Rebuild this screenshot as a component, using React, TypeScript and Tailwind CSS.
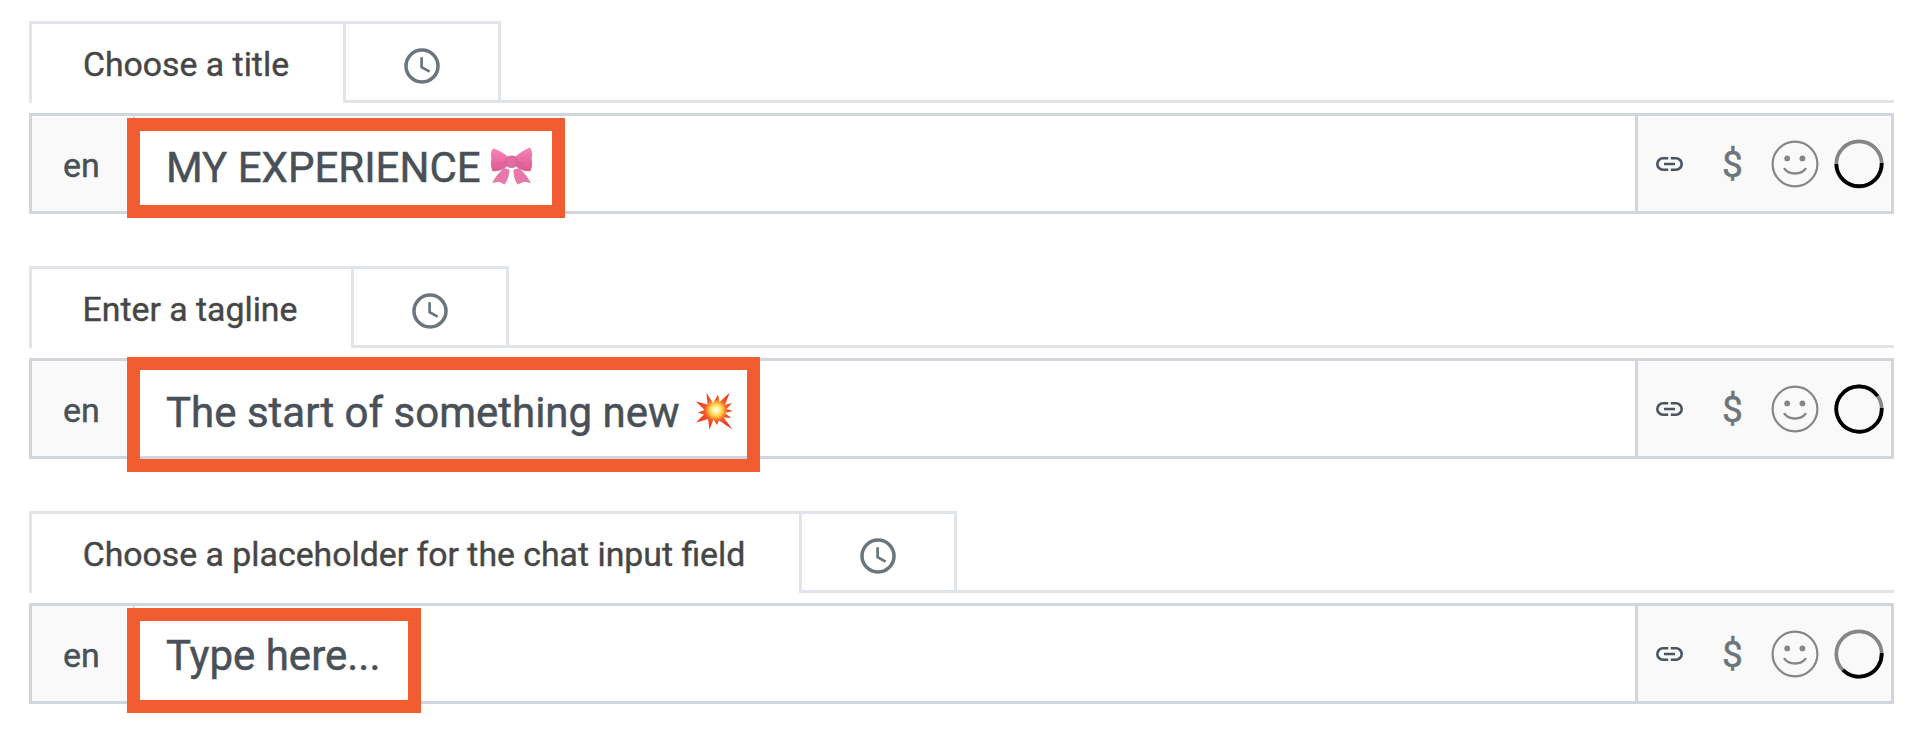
import React from "react";

type Row = {
  label: string;
  value: string;
  emoji?: "bow" | "boom";
  tabW: string;
  frame: string;
  valuePad: string;
  ring: number;
};

const rows: Row[] = [
  { label: "Choose a title", value: "MY EXPERIENCE", emoji: "bow", tabW: "w-[314px]", frame: "top-[2px] w-[438px] h-[100px]", valuePad: "pt-[7px]", ring: 180 },
  { label: "Enter a tagline", value: "The start of something new", emoji: "boom", tabW: "w-[322px]", frame: "top-[-4px] w-[633px] h-[115px]", valuePad: "pt-[8px]", ring: 325 },
  { label: "Choose a placeholder for the chat input field", value: "Type here...", tabW: "w-[770px]", frame: "top-[2px] w-[294px] h-[105px]", valuePad: "pt-[3px]", ring: 135 },
];

function Clock() {
  return (
    <svg viewBox="0 0 36 36" className="-ml-px size-9" fill="none" stroke="#6c757d" strokeWidth="3.5">
      <circle cx="18" cy="18" r="16" />
      <path d="M17.6 9.2V19.2L25.6 23.6" strokeWidth="2.7" />
    </svg>
  );
}

function Link() {
  return (
    <svg viewBox="0 0 27 14" className="h-[14px] w-[27px]" fill="none" stroke="#4b5560" strokeWidth="2.6">
      <path d="M12.2 1.3H7A5.7 5.7 0 0 0 7 12.7H12.2M14.8 1.3H20A5.7 5.7 0 0 1 20 12.7H14.8M8 7H19" />
    </svg>
  );
}

function Smile() {
  return (
    <svg viewBox="0 0 48 48" className="size-12" fill="none" stroke="#868686" strokeWidth="2.2">
      <circle cx="24" cy="24" r="22.4" />
      <circle cx="16.2" cy="18.4" r="2.9" fill="#868686" stroke="none" />
      <circle cx="31.4" cy="18.4" r="2.9" fill="#868686" stroke="none" />
      <path d="M13 28.2C17.5 35.3 30.5 35.3 35 28.2" strokeWidth="2.4" />
    </svg>
  );
}

function Ring({ deg }: { deg: number }) {
  const a = (deg * Math.PI) / 180;
  const x = 25 + 22.7 * Math.cos(a);
  const y = 25 + 22.7 * Math.sin(a);
  return (
    <svg viewBox="0 0 50 50" className="size-[50px]" fill="none" strokeWidth="3.7">
      <circle cx="25" cy="25" r="22.7" stroke="#858585" />
      <path d={`M47.7 24A22.7 22.7 0 ${deg > 180 ? 1 : 0} 1 ${x} ${y}`} stroke="#000" />
    </svg>
  );
}

function Bow() {
  return (
    <svg viewBox="0 0 44 40" preserveAspectRatio="none" className="-ml-px mt-[5px] h-[38px] w-[43px]">
      <defs>
        <linearGradient id="bow" x1="0" y1="0" x2="0" y2="1">
          <stop offset="0" stopColor="#f288b5" />
          <stop offset=".45" stopColor="#ec70a6" />
          <stop offset="1" stopColor="#d95a92" />
        </linearGradient>
      </defs>
      <path d="M14 22L7 30L2 38L9 36.5L15 39.5Q19.5 33 20 24Z" fill="#e878a8" />
      <path d="M30 22L37 30L42 38L35 36.5L28 39.5Q24 33 24 24Z" fill="#e878a8" />
      <path d="M18 10Q10 3 3 1.5Q0 6 1.500 12Q0 19 2.500 25.500Q11 26 18 20Z" fill="url(#bow)" />
      <path d="M26 10Q34 3 41 .5Q44.500 6 42.500 12Q44 19 41.500 25.500Q33 26 26 20Z" fill="url(#bow)" />
      <path d="M8 17.500Q13 17.500 17 15M36 17.500Q31 17.500 27 15" stroke="#d65c92" strokeWidth="1" fill="none" />
      <rect x="16.500" y="9.500" width="11" height="12" rx="4.500" fill="#e46ba0" stroke="#d2578c" strokeWidth=".8" />
    </svg>
  );
}

function Boom() {
  return (
    <svg viewBox="0 0 38 38" className="ml-[5px] mt-[5px] size-[38px]">
      <defs>
        <radialGradient id="boom" gradientUnits="userSpaceOnUse" cx="21" cy="18" r="20">
          <stop offset="0" stopColor="#fff" />
          <stop offset=".16" stopColor="#fff3a0" />
          <stop offset=".34" stopColor="#ffc63a" />
          <stop offset=".54" stopColor="#f6592a" />
          <stop offset="1" stopColor="#e8301c" />
        </radialGradient>
      </defs>
      <path d="M11.500 1L18 11L23 2.500L24.500 10L34.500 1L30 13L37 11L31.500 17L38 19L30 21L36 26L28.500 25.500L37.500 37.500L24 28.500L22 33L18.500 27.500L14.500 37.500L13 27L1 30.500L9 22.500L3 20.500L9.500 18L1 9.500L12.500 12.500Z" fill="url(#boom)" />
    </svg>
  );
}

function Field({ row }: { row: Row }) {
  return (
    <section className="flex h-[245px] flex-col">
      <div className="flex h-[82px]">
        <div className={`${row.tabW} flex items-center justify-center border-l-[3px] border-t-[3px] border-[#e1e5ea] pr-[3px] pt-[3px] text-[33.8px] text-[#464646] [-webkit-text-stroke:0.4px_#464646]`}>
          <span className="whitespace-nowrap">{row.label}</span>
        </div>
        <div className="flex w-[158px] items-center justify-center border-[3px] border-[#e1e5ea] pt-2">
          <Clock />
        </div>
        <div className="grow border-b-[3px] border-[#e1e5ea]" />
      </div>
      <div className="relative mt-2.5 flex h-[101px] border-[3px] border-[#d1d6dc]">
        <div className="flex w-[103px] items-center justify-center border-r-2 border-[#d1d6dc] bg-[#f9f9f9] pr-0.5 pt-[3px] text-[34px] text-[#495057] [-webkit-text-stroke:0.4px_#495057]">en</div>
        <div className="flex grow items-center gap-2.5 pl-[31px] text-[42px] text-[#495057] [-webkit-text-stroke:0.5px_#495057]">
          <span className={`${row.valuePad} whitespace-nowrap`}>{row.value}</span>
          {row.emoji === "bow" && <Bow />}
          {row.emoji === "boom" && <Boom />}
        </div>
        <div className="flex w-[256px] items-center border-l-[3px] border-[#d1d6dc] bg-[#f9f9f9] pl-[18px]">
          <Link />
          <span className="ml-[39px] w-[18px] pt-[3px] text-[37px] text-[#6c757d] [-webkit-text-stroke:0.5px_#6c757d]">$</span>
          <span className="ml-[31px]"><Smile /></span>
          <span className="ml-[15px]"><Ring deg={row.ring} /></span>
        </div>
        <div className={`${row.frame} absolute left-[95px] border-[13px] border-[#f15c30]`} />
      </div>
    </section>
  );
}

export default function App() {
  return (
    <main className="h-[754px] w-[1920px] overflow-hidden bg-white pl-[29px] pr-[26px] pt-[21px] font-['Roboto',sans-serif]">
      {rows.map((row) => (
        <Field key={row.label} row={row} />
      ))}
    </main>
  );
}
